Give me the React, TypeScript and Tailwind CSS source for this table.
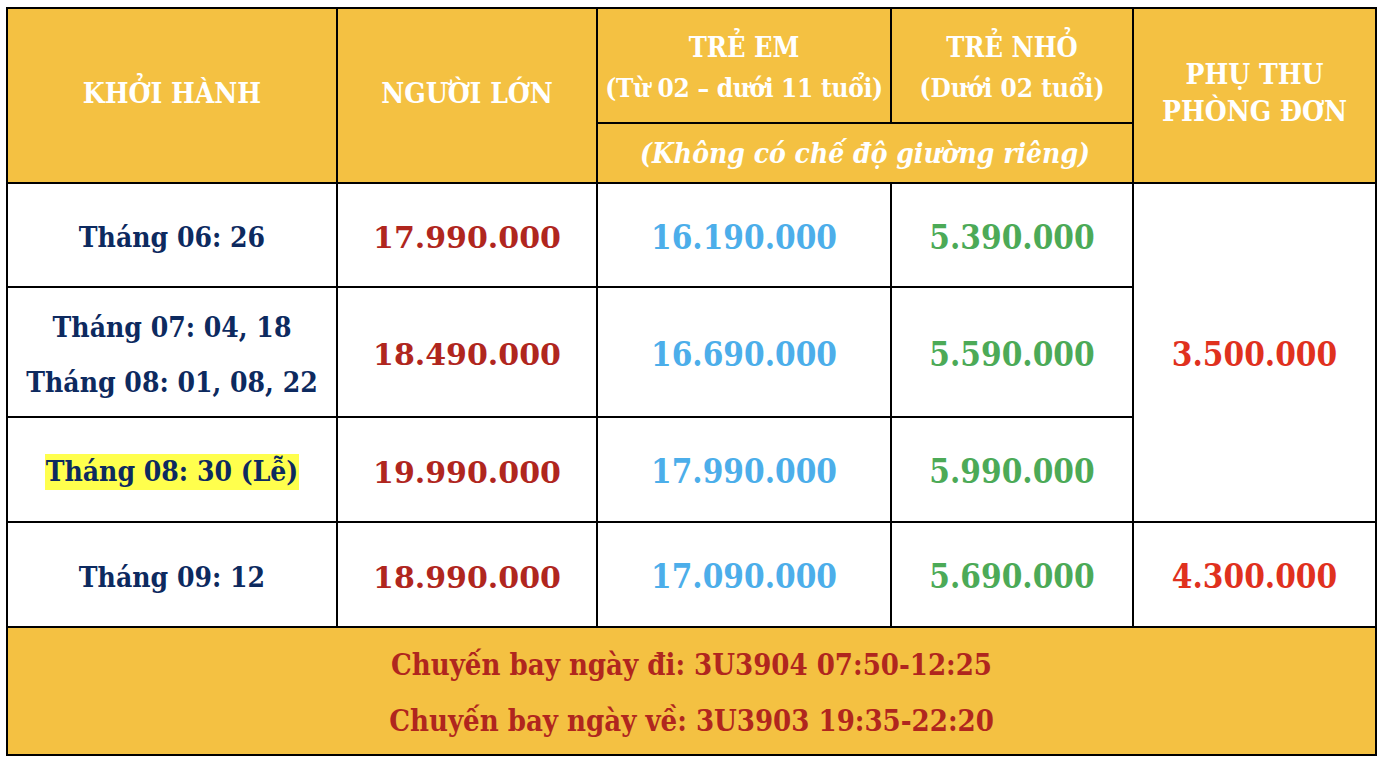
import React from "react";

const Cell = ({ className = "", children }: { className?: string; children?: React.ReactNode }) => (
  <div className={`flex flex-col items-center justify-center text-center ${className}`}>{children}</div>
);

export default function App() {
  const rows = [
    { d: ["Tháng 06: 26"], a: "17.990.000", c: "16.190.000", i: "5.390.000" },
    { d: ["Tháng 07: 04, 18", "Tháng 08: 01, 08, 22"], a: "18.490.000", c: "16.690.000", i: "5.590.000" },
    { d: ["Tháng 08: 30 (Lễ)"], a: "19.990.000", c: "17.990.000", i: "5.990.000", hl: true },
    { d: ["Tháng 09: 12"], a: "18.990.000", c: "17.090.000", i: "5.690.000" },
  ];
  const cond = "font-['DejaVu_Serif_Condensed','DejaVu_Serif','Liberation_Serif',serif] font-stretch-condensed";
  const serif = "font-['DejaVu_Serif','Liberation_Serif',serif] font-stretch-normal";
  return (
    <div className="w-[1386px] h-[768px] bg-white pt-[7px] pl-[6px]">
      <div className={`grid w-fit bg-black gap-[2px] p-[2px] grid-cols-[328px_258px_292px_240px_241px] grid-rows-[113px_58px_102px_128px_103px_103px_126px] font-bold ${cond}`}>
        <Cell className="row-span-2 bg-[#f4c142] text-white text-[28px] pb-[3px]">KHỞI HÀNH</Cell>
        <Cell className="row-span-2 bg-[#f4c142] text-white text-[28px] pb-[3px]">NGƯỜI LỚN</Cell>
        <Cell className="bg-[#f4c142] text-white leading-[40px] pt-[4px]">
          <span className="text-[27px]">TRẺ EM</span>
          <span className="text-[26px] tracking-[-0.3px]">(Từ 02 – dưới 11 tuổi)</span>
        </Cell>
        <Cell className="bg-[#f4c142] text-white leading-[40px] pt-[4px]">
          <span className="text-[27px]">TRẺ NHỎ</span>
          <span className="text-[26px]">(Dưới 02 tuổi)</span>
        </Cell>
        <Cell className="row-span-2 bg-[#f4c142] text-white text-[28px] leading-[37px] pb-[6px]">
          <span>PHỤ THU</span>
          <span>PHÒNG ĐƠN</span>
        </Cell>
        <Cell className="col-span-2 bg-[#f4c142] text-white italic text-[28px] pt-[1px]">
          (Không có chế độ giường riêng)
        </Cell>
        {rows.map((r, idx) => (
          <React.Fragment key={idx}>
            <Cell className="bg-white text-[#0d2a5f] text-[28px] leading-[55px] pt-[5px]">
              {r.d.map((t) => (
                <span key={t} className={r.hl ? "bg-[#ffff4d] leading-[36px] px-[1px]" : ""}>{t}</span>
              ))}
            </Cell>
            <Cell className="bg-white text-[#b0261e] text-[30px] pt-[5px]"><span className={serif}>{r.a}</span></Cell>
            <Cell className="bg-white text-[#4caeea] text-[33px] pt-[5px]">{r.c}</Cell>
            <Cell className="bg-white text-[#4caa57] text-[33px] pt-[5px]">{r.i}</Cell>
            {idx === 0 && (
              <Cell className="row-span-3 bg-white text-[#e0311e] text-[33px] pt-[5px]">3.500.000</Cell>
            )}
            {idx === 3 && (
              <Cell className="bg-white text-[#e0311e] text-[33px] pt-[5px]">4.300.000</Cell>
            )}
          </React.Fragment>
        ))}
        <Cell className="col-span-5 bg-[#f4c142] text-[#b0261e] text-[29px] leading-[56px] pt-[3px]">
          <span>Chuyến bay ngày đi: 3U3904 07:50-12:25</span>
          <span>Chuyến bay ngày về: 3U3903 19:35-22:20</span>
        </Cell>
      </div>
    </div>
  );
}
